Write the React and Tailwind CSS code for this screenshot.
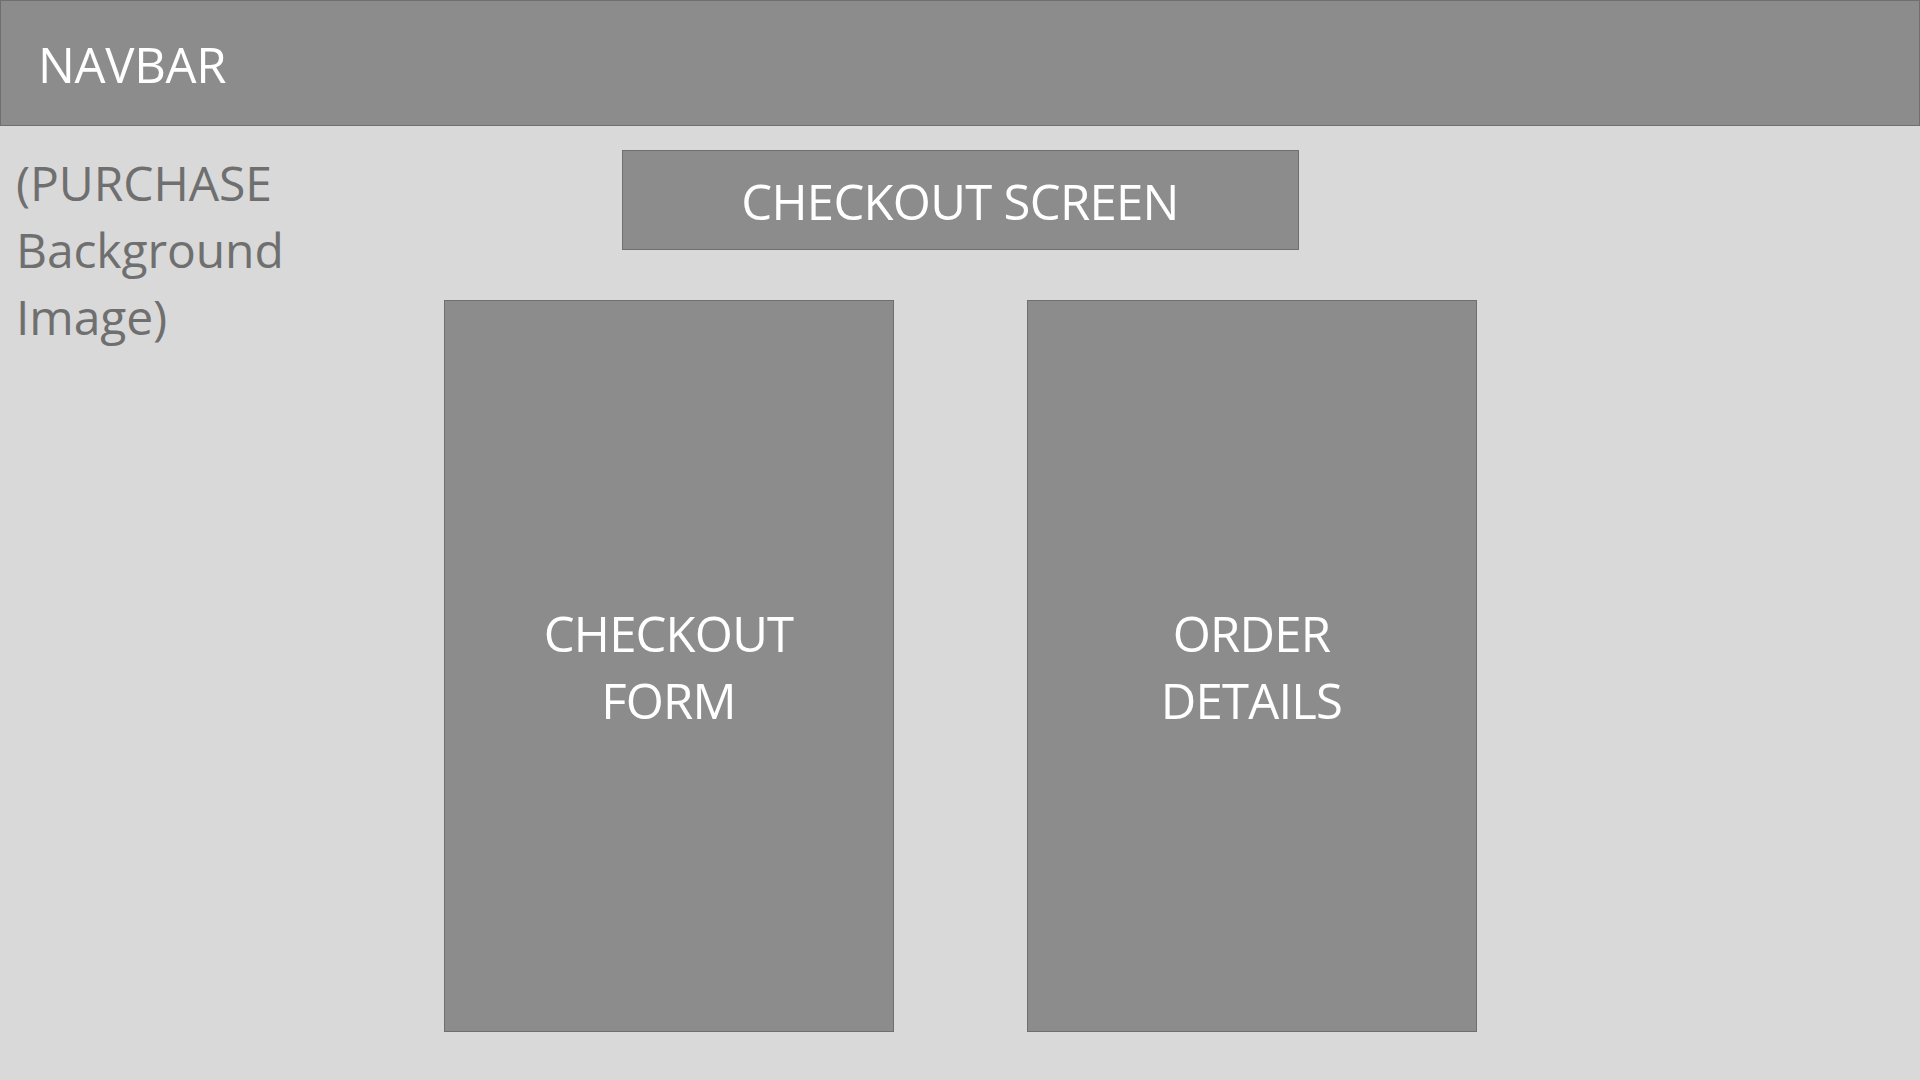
export default function App() {
  const font = { fontFamily: '"Open Sans", "Noto Sans", sans-serif' };
  return (
    <div className="w-[1920px] h-[1080px] bg-[#d9d9d9] flex flex-col overflow-hidden" style={font}>
      <header className="h-[126px] shrink-0 bg-[#8c8c8c] border border-[#6f6f6f] flex items-center pl-[37px]">
        <span className="text-white text-[49px] leading-none tracking-[-0.3px] mt-[2px]">NAVBAR</span>
      </header>
      <main className="flex-1 grid grid-cols-[1fr_auto_1fr]">
        <div className="pl-[16px] pt-[23px]">
          <p className="text-[#6f6f6f] text-[48px] leading-[67px] tracking-[-0.1px] w-[300px]">
            (PURCHASE<br />Background<br />Image)
          </p>
        </div>
        <div className="flex flex-col items-center pt-[24px]">
          <div className="w-[677px] h-[100px] bg-[#8c8c8c] border border-[#6f6f6f] flex items-center justify-center">
            <span className="text-white text-[49px] leading-none tracking-[-0.7px] mt-[3px]">CHECKOUT SCREEN</span>
          </div>
          <div className="mt-[50px] flex gap-[133px]">
            <div className="w-[450px] h-[732px] bg-[#8c8c8c] border border-[#6f6f6f] flex items-center justify-center">
              <p className="text-white text-[49px] leading-[67px] text-center tracking-[-0.8px] mt-[2px]">CHECKOUT<br />FORM</p>
            </div>
            <div className="w-[450px] h-[732px] bg-[#8c8c8c] border border-[#6f6f6f] flex items-center justify-center">
              <p className="text-white text-[49px] leading-[67px] text-center tracking-[-0.8px] mt-[2px]">ORDER<br />DETAILS</p>
            </div>
          </div>
        </div>
        <div />
      </main>
    </div>
  );
}
